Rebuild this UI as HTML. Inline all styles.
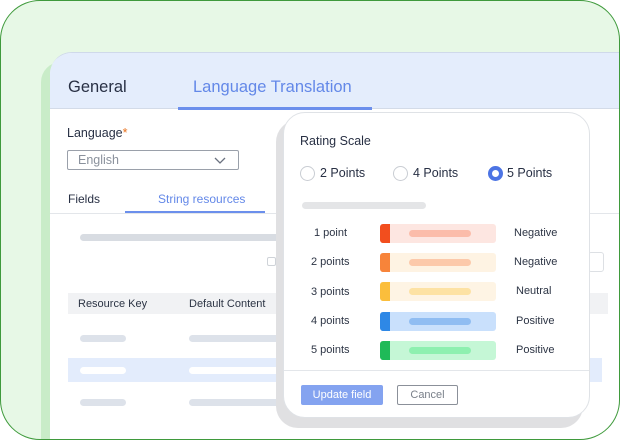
<!DOCTYPE html>
<html><head><style>
*{margin:0;padding:0;box-sizing:border-box}
body{width:620px;height:440px;overflow:hidden;background:#fff;font-family:"Liberation Sans",sans-serif;position:relative}
.a{position:absolute}
.outer{left:0;top:0;width:620px;height:440px;border-radius:40px;background:#e7f8e6;overflow:hidden}
.ring{left:0;top:0;width:620px;height:440px;border:1.5px solid #3f9a3c;border-radius:40px}
.bar{background:#dde2ea;border-radius:4px;height:7px}
.t{color:#2c3444;font-size:11px}
</style></head><body>
<div class="a outer">
 <div class="a" style="left:41px;top:62px;width:20px;height:378px;background:#c9ecc8;border-radius:22px 0 0 0"></div>
 <div class="a" style="left:50px;top:52px;width:570px;height:388px;background:#fff;border-radius:22px 0 0 0;border-top:1px solid #cfd9ea;overflow:hidden">
  <div class="a" style="left:0;top:0;width:600px;height:56px;background:#e4edfc;border-bottom:1px solid #d3dbe8"></div>
  <div class="a" style="left:18px;top:25px;font-size:16.5px;color:#283044">General</div>
  <div class="a" style="left:143px;top:25px;font-size:16.5px;color:#6388e8">Language Translation</div>
  <div class="a" style="left:128px;top:54px;width:194px;height:3px;background:#6b8fec"></div>
  <div class="a" style="left:17px;top:73px;font-size:12.5px;color:#283044">Language<span style="color:#e8711c">*</span></div>
  <div class="a" style="left:17px;top:97px;width:172px;height:20px;border:1px solid #9aa0aa;border-radius:2px;font-size:12.5px;color:#8a919c;padding:2px 0 0 10px">English
   <svg class="a" style="left:146px;top:6px" width="12" height="7"><path d="M1 1l5 5 5-5" fill="none" stroke="#6b7280" stroke-width="1.3"/></svg></div>
  <div class="a" style="left:18px;top:139px;font-size:12px;color:#283044">Fields</div>
  <div class="a" style="left:108px;top:139px;font-size:12px;color:#6388e8">String resources</div>
  <div class="a" style="left:75px;top:158px;width:140px;height:2px;background:#6b8fec"></div>
  <div class="a" style="left:0;top:160px;width:600px;height:1px;background:#e3e6ea"></div>
  <div class="a bar" style="left:30px;top:181px;width:220px;background:#d8dce2"></div>
  <div class="a" style="left:217px;top:204px;width:9px;height:9px;border:1px solid #cfd3d8;border-radius:2px"></div>
  <div class="a" style="left:538px;top:199px;width:16px;height:20px;border:1px solid #dde0e4;border-radius:3px"></div>
  <div class="a" style="left:18px;top:240px;width:540px;height:21px;background:#f1f2f4"></div>
  <div class="a t" style="left:28px;top:245px">Resource Key</div>
  <div class="a t" style="left:139px;top:245px">Default Content</div>
  <div class="a bar" style="left:30px;top:282px;width:46px"></div>
  <div class="a bar" style="left:139px;top:282px;width:100px"></div>
  <div class="a" style="left:18px;top:305px;width:534px;height:24px;background:#e3ecfc"></div>
  <div class="a bar" style="left:30px;top:314px;width:46px;background:#fff"></div>
  <div class="a bar" style="left:139px;top:314px;width:100px;background:#fff"></div>
  <div class="a bar" style="left:30px;top:346px;width:46px"></div>
  <div class="a bar" style="left:139px;top:346px;width:100px"></div>
 </div>
 <div class="a" style="left:276px;top:120px;width:307px;height:308px;background:#e0e0e2;border-radius:22px"></div>
 <div class="a" style="left:283px;top:112px;width:307px;height:306px;background:#fff;border:1px solid #dfe2e6;border-radius:22px">
  <div class="a" style="left:16px;top:21px;font-size:12.5px;color:#283044">Rating Scale</div>
  <div class="a" style="left:16px;top:53px;width:15px;height:15px;border:1px solid #c9cdd3;border-radius:50%"></div>
  <div class="a" style="left:36px;top:53px;font-size:12.5px;color:#283044">2 Points</div>
  <div class="a" style="left:109px;top:53px;width:15px;height:15px;border:1px solid #c9cdd3;border-radius:50%"></div>
  <div class="a" style="left:129px;top:53px;font-size:12.5px;color:#283044">4 Points</div>
  <div class="a" style="left:204px;top:53px;width:15px;height:15px;border:4px solid #4c74e4;border-radius:50%"></div>
  <div class="a" style="left:223px;top:53px;font-size:12.5px;color:#283044">5 Points</div>
  <div class="a bar" style="left:18px;top:89px;width:124px;background:#e4e5e7"></div>
  <div class="a" style="left:0;top:257px;width:305px;height:1px;background:#e3e6ea"></div>
  <div class="a" style="left:17px;top:272px;width:82px;height:20px;background:#84a3f0;border-radius:2px;color:#fff;font-size:11px;text-align:center;line-height:20px">Update field</div>
  <div class="a" style="left:113px;top:272px;width:61px;height:20px;border:1px solid #8b9099;border-radius:2px;color:#7a808a;font-size:11px;text-align:center;line-height:18px">Cancel</div>
 </div>
 <div class="a t" style="left:314px;top:227px">1 point</div>
 <div class="a t" style="left:311px;top:256px">2 points</div>
 <div class="a t" style="left:311px;top:286px">3 points</div>
 <div class="a t" style="left:311px;top:315px">4 points</div>
 <div class="a t" style="left:311px;top:344px">5 points</div>
 <div class="a t" style="left:514px;top:227px">Negative</div>
 <div class="a t" style="left:514px;top:256px">Negative</div>
 <div class="a t" style="left:516px;top:285px">Neutral</div>
 <div class="a t" style="left:516px;top:315px">Positive</div>
 <div class="a t" style="left:516px;top:344px">Positive</div>
 <div class="a" style="left:380px;top:224px;width:116px;height:19px;background:#fde6e1;border-left:10px solid #f24e1e;border-radius:3px"><div class="a bar" style="left:19px;top:6px;width:62px;background:#fbbcaa"></div></div>
 <div class="a" style="left:380px;top:253px;width:116px;height:19px;background:#fef3e3;border-left:10px solid #f7843a;border-radius:3px"><div class="a bar" style="left:19px;top:6px;width:62px;background:#fcc9aa"></div></div>
 <div class="a" style="left:380px;top:282px;width:116px;height:19px;background:#fef4e4;border-left:10px solid #fbbe3c;border-radius:3px"><div class="a bar" style="left:19px;top:6px;width:62px;background:#fde2a4"></div></div>
 <div class="a" style="left:380px;top:312px;width:116px;height:19px;background:#c9e0fc;border-left:10px solid #2e88e6;border-radius:3px"><div class="a bar" style="left:19px;top:6px;width:62px;background:#90bdf2"></div></div>
 <div class="a" style="left:380px;top:341px;width:116px;height:19px;background:#c5f7d6;border-left:10px solid #1fba58;border-radius:3px"><div class="a bar" style="left:19px;top:6px;width:62px;background:#8ef0b0"></div></div>
</div>
<div class="a ring"></div>
</body></html>
